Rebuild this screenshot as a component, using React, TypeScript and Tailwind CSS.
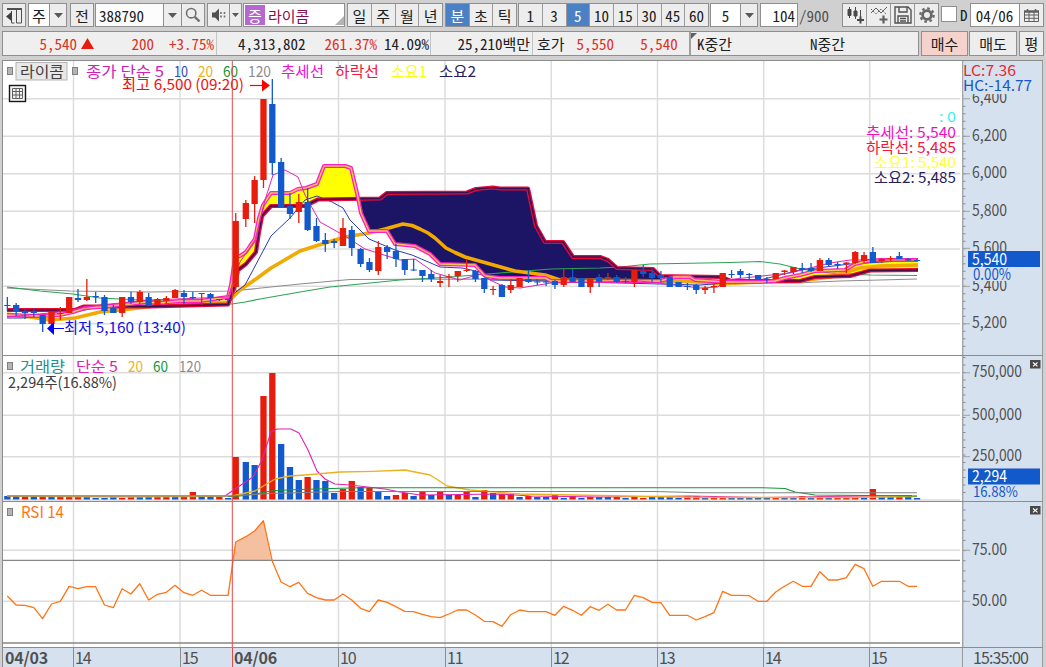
import React from 'react';

const RED = '#e81c0c';
const BLUE = '#1259cb';
const FONT = '"Noto Sans CJK KR", "Liberation Sans", sans-serif';

// color, high, open/close top, open/close bottom, low (pane pixels)
const candles: [string, number, number, number, number][] = [
  ['b', 297, 305, 306, 311], ['b', 303, 305, 312, 316], ['b', 309, 312, 313, 319], ['b', 308, 312, 313, 317],
  ['b', 315, 315, 324, 332], ['r', 312, 312, 324, 325], ['r', 307, 313, 314, 320], ['r', 297, 297, 313, 313],
  ['b', 289, 298, 300, 302], ['r', 279, 297, 300, 301], ['b', 292, 296, 297, 303], ['b', 295, 297, 311, 315],
  ['b', 305, 308, 313, 313], ['r', 297, 297, 313, 317], ['b', 292, 297, 302, 304], ['r', 290, 292, 302, 304],
  ['b', 293, 297, 306, 306], ['r', 298, 299, 305, 305], ['r', 296, 298, 301, 304], ['r', 289, 290, 298, 298],
  ['b', 290, 293, 297, 304], ['b', 292, 297, 298, 299], ['r', 293, 293, 294, 305], ['b', 293, 294, 298, 303],
  ['b', 299, 299, 300, 301], ['b', 299, 299, 300, 301], ['r', 213, 221, 287, 290], ['r', 200, 203, 219, 227],
  ['r', 176, 180, 204, 223], ['r', 99, 99, 180, 188], ['b', 79, 104, 163, 175], ['b', 158, 162, 207, 207],
  ['b', 193, 206, 214, 219], ['r', 194, 202, 212, 223], ['b', 188, 202, 230, 231], ['b', 218, 226, 241, 242],
  ['b', 233, 240, 244, 252], ['b', 239, 241, 243, 248], ['r', 218, 228, 246, 246], ['b', 226, 230, 248, 256],
  ['b', 248, 249, 264, 267], ['b', 258, 262, 270, 272], ['r', 241, 247, 271, 275], ['b', 245, 247, 252, 259],
  ['b', 244, 251, 259, 267], ['b', 259, 259, 270, 275], ['b', 259, 269.5, 270.5, 271], ['b', 270, 270, 276, 282],
  ['b', 270, 274, 279, 282], ['r', 275, 281, 283, 287], ['r', 274, 276.5, 277.5, 287], ['r', 271, 271, 276, 282],
  ['r', 259, 270, 271, 272], ['b', 270, 271, 279, 282], ['b', 278, 278, 289, 293], ['r', 286, 289, 290, 295],
  ['b', 284, 285, 297, 297], ['r', 279, 285, 290, 293], ['r', 278, 278, 287, 287], ['b', 270, 279, 282, 283],
  ['b', 279, 281.5, 282.5, 285], ['b', 280, 281.5, 282.5, 286], ['b', 280, 281, 285, 289], ['r', 269, 277, 285, 287],
  ['b', 269, 277, 282, 282], ['b', 278, 278, 287, 287], ['r', 278, 279, 287, 293], ['b', 274, 277, 282, 287],
  ['r', 273, 277, 278, 280], ['b', 275, 277, 282, 283], ['b', 277, 281, 282, 283], ['r', 270, 270, 282, 287],
  ['b', 265, 271, 274, 277], ['b', 269, 273, 278, 282], ['b', 271, 275, 278, 282], ['b', 275, 277, 287, 287],
  ['b', 282, 282, 287, 287], ['b', 283, 286, 287, 290], ['b', 284, 285, 290, 294], ['r', 286, 288, 290, 294],
  ['r', 284, 286, 287, 293], ['r', 273, 273, 287, 287], ['b', 270, 274, 275, 278], ['b', 269, 271, 275, 278],
  ['b', 273, 274, 275, 280], ['b', 275, 275, 279, 279], ['b', 277, 279, 280, 283], ['r', 273, 273, 279, 279],
  ['r', 270, 270.5, 272, 275], ['r', 267, 267, 272, 274], ['b', 263, 268, 270, 273], ['b', 263, 268, 271, 272],
  ['r', 258, 260, 271, 271], ['b', 258, 260, 265, 266], ['b', 262, 264, 265, 269], ['r', 262, 262.5, 264, 273],
  ['r', 251, 252, 263, 264], ['r', 252, 255, 261, 263], ['b', 247, 252, 263, 263], ['r', 258, 259, 261, 263],
  ['r', 256, 258, 259, 261], ['b', 252, 256, 259, 259], ['b', 258, 259, 260.5, 261], ['b', 259, 260, 261, 261],
];

const volumeTops = [
  496, 496, 497, 497, 497, 497, 497, 497, 497, 497, 498, 498, 497, 498, 497, 497, 497, 497, 497, 497, 497, 492, 497, 497, 497, 498,
  457, 462, 465, 396, 373, 444, 467, 480, 477, 480, 481, 493, 489, 481, 487, 488, 492, 496, 495, 493, 496, 492, 495, 492,
  495, 495, 492, 497, 490, 493, 494, 494, 497, 496, 497, 497, 495, 498, 496, 498, 497, 497, 497, 497, 498, 497, 498, 497,
  497, 497, 498, 496, 496, 498, 496, 497, 498, 498, 498, 498, 498, 498, 498, 498, 496, 498, 496, 498, 498, 498, 497, 497, 489, 497,
  497, 497, 497, 498,
];
const volumeColors =
  'bbrbrbrrrbbbbrrbbrrbrrbbrb' + 'rbbrrbbbrbbbrrbrbbrrbrbrbrrbrbrrbrbbrbrbrbbrbrrbbbbrrbrrbbbbbrbbrbrbrrrbrbbrbb';

const rsi = [
  288, 315, 316, 323, 356, 312, 304, 259, 266, 260, 260, 315, 323, 266, 282, 251, 300, 283, 277, 256, 278, 286, 271, 286, 286, 286,
  126, 110, 93, 62, 184, 246, 260, 247, 280, 293, 300, 300, 282, 300, 325, 335, 300, 307, 320, 334, 335, 343, 350, 353,
  342, 330, 330, 345, 364, 365, 379, 344, 330, 335, 335, 335, 346, 319, 331, 346, 320, 331, 313, 330, 330, 286, 293, 307,
  308, 346, 346, 346, 360, 350, 338, 274, 286, 286, 287, 304, 304, 276, 259, 244, 259, 259, 215, 240, 240, 233, 193, 206, 259, 244,
  244, 244, 259, 259,
];

const barX = (i: number) => (i === 26 ? 235.7 : 7.3 + i * 8.832);
const rsiPoints = rsi.map((v, i) => `${barX(i).toFixed(1)},${(500 + v / 3).toFixed(1)}`).join(' ');

const trend =
  '7,315 40,316 60,315 73,312 85,308 100,307 130,304 145,302 160,303 180,301 200,301 228,297 231,285 235,258 240,256 246,252 250,246 255,239 259,218 263,205 271,193 290,193 298,189 306,188 317,184 324,166 345,166 351,168 357,193 361,213 369,231 387,231 395,244 415,246 430,254 440,264 475,265 485,276 500,278 545,278 551,281 660,281 675,277 690,277 695,280 725,282 760,282 775,281 785,278 800,275 815,271 845,270 855,264 868,261 880,260 918,260';
const fall =
  '7,310 75,310 84,306.5 150,306.5 228,304.5 235,285 238,270 246,264 256,252 259,232 262,216 271,206 305,206 318,199.5 380,198.5 387,193 467,192.5 476,189 493,187.5 500,188.5 528,188.5 536,226 545,242 563,242 573,257 600,257 608,260 617,268 653,269 660,276 721,277 731,281 800,281 815,277 850,276 870,270.5 918,270';
const ma20 =
  '7,314 30,317 50,320 75,318 100,312 130,309 170,304 228,302 240,290 256,279 271,268 300,251 325,243 345,237 369,233 385,229 403,224 412,225.5 420,229 428,233 435,238 446,248 455,252.5 465,257 490,264 515,271 545,275 560,280 690,281 720,284 760,282 800,281 830,277 860,268 880,266 918,265';
const ma60 =
  '7,287 40,291 73,294 100,298 140,300 190,302 232,304 245,302 260,299 300,292 330,287 350,285 400,280 450,277 500,273 551,269 600,268 620,267 650,264 730,262.5 760,261.5 780,264 800,269 830,273 870,275 917,275.5';
const ma120 = '7,288 70,291 150,292 232,291 300,284 350,279.5 480,279 560,281 700,283 795,283 840,281 880,280 917,279';
const ma10 =
  '7,318 22,318 60,315 100,307 150,303 228,298 245,285 253,270 262,253 271,236 290,218 305,200 317,196 332,202 343,208 350,220 369,239 395,250 412,255 440,267 462,268 480,272 490,280 540,281 700,285 760,280 800,270 850,264 917,260';
const ma5 =
  '7,317 60,312 100,305 150,300 228,297 240,262 255,240 265,200 273,175 285,170 298,177 305,195 320,222 345,236 365,249 400,260 415,259 435,273 460,280 480,274 490,280 505,287 520,288 551,283 640,281 700,288 718,287 725,280 790,273 830,263 850,260 917,260';

const hours = [73.5, 180, 338.5, 445, 551.3, 657.5, 763.7, 869.7];

const T = ({ x, y, w, c, size = 15, anchor, children }: any) => (
  <text x={x} y={y} fill={c} fontSize={size} fontFamily={FONT} textLength={w} textAnchor={anchor} lengthAdjust="spacingAndGlyphs">
    {children}
  </text>
);

const Pane = ({ top, height, lines, children }: any) => (
  <svg width={959} height={height} viewBox={`3 ${top} 959 ${height}`} className="block shrink-0 bg-white">
    <g stroke="#dcdcdc" strokeWidth={1.5}>
      {hours.map(x => <line key={x} x1={x} x2={x} y1={top} y2={top + height} />)}
      {lines.map((y: number) => <line key={y} x1={3} x2={960} y1={y} y2={y} />)}
    </g>
    {children}
    <line x1={232.3} x2={232.3} y1={top} y2={top + height} stroke="#e04a4a" strokeWidth={1} />
  </svg>
);

const Axis = ({ top, height, ticks, labels, children }: any) => (
  <svg width={81} height={height} viewBox={`962 ${top} 81 ${height}`} className="block shrink-0 overflow-visible bg-[#d6e1ef]">
    <line x1={962.7} x2={962.7} y1={top} y2={top + height} stroke="#a4a4a4" strokeWidth={1.4} />
    {ticks.map((y: number) => <line key={y} x1={963} x2={965.5} y1={y} y2={y} stroke="#8c8c8c" />)}
    {labels.map(([text, y, w]: any) => (
      <g key={text}>
        <line x1={963} x2={970} y1={y} y2={y} stroke="#a0a0a0" />
        <T x={972} y={y + 4.5} w={w} c="#505050" size={16}>{text}</T>
      </g>
    ))}
    {children}
    <line x1={1042.5} x2={1042.5} y1={top} y2={top + height} stroke="#9a9a9a" />
  </svg>
);

const steps = (from: number, n: number, by: number) => Array.from({ length: n }, (_, i) => from + i * by);

const Marker = ({ x, y }: any) => <rect x={x} y={y} width={5} height={7} fill="#b4b4b4" stroke="#808080" />;

const CloseBox = ({ y }: any) => (
  <g>
    <rect x={1030} y={y} width={10.5} height={8.5} fill="#484848" />
    <path d={`M1033 ${y + 2.5}l4.5 3.8m0-3.8l-4.5 3.8`} stroke="#fff" strokeWidth={1.1} />
  </g>
);

const PricePane = () => (
  <Pane top={61} height={294} lines={[98.8, 136.3, 173.8, 211.3, 248.9, 286.3, 323.8]}>
    <polygon fill="#ffff00" points="231,300 235,258 246,252 255,239 259,218 263,205 271,193 290,193 306,188 317,184 324,166 345,166 351,168 358,199 318,199 305,206 271,206 262,216 256,252 246,264 238,270" />
    <polygon fill="#1c1464" points="358,199 380,198.5 387,193 467,192.5 476,189 528,188.5 536,226 545,242 563,242 573,257 600,257 608,260 617,268 653,269 660,276 660,281 551,281 545,278 500,278 485,276 475,265 440,264 430,254 415,246 395,244 387,231 369,231 361,213" />
    <polygon fill="#ffff00" points="775,281 785,278 800,275 815,271 845,270 855,264 868,261 918,260 918,270 870,270.5 850,276 815,277 800,281" />
    <g fill="none" strokeLinejoin="round">
      <polyline points={ma120} stroke="#8c8c8c" strokeWidth={1.2} />
      <polyline points={ma60} stroke="#2fa354" strokeWidth={1.2} />
      <polyline points={ma20} stroke="#f2a900" strokeWidth={3.6} />
      <polyline points={ma10} stroke="#2a3cb4" strokeWidth={1} />
      <polyline points={fall} stroke="#e8093c" strokeWidth={4.2} />
      <polyline points={fall} stroke="#3c1050" strokeWidth={1.6} />
      <polyline points={trend} stroke="#ff1fc0" strokeWidth={4} />
      <polyline points={trend} stroke="#f5c35a" strokeWidth={1.4} />
      <polyline points={ma5} stroke="#dc28b4" strokeWidth={1} />
    </g>
    {candles.map(([c, hi, top, bottom, lo], i) => (
      <g key={i} fill={c === 'r' ? RED : BLUE}>
        <rect x={barX(i) - 0.6} y={hi} width={1.3} height={lo - hi} />
        <rect x={barX(i) - 3.1} y={top} width={6.3} height={bottom - top} />
      </g>
    ))}

    <Marker x={7.5} y={67.5} />
    <rect x={16} y={62.5} width={51} height={17.5} fill="#e8e8e8" stroke="#b4b4b4" />
    <T x={20} y={77} w={44} c="#404040">라이콤</T>
    <Marker x={72.5} y={67.5} />
    <T x={86} y={77} w={78} c="#d020b8">종가 단순 5</T>
    <T x={174} y={77} w={14} c="#2848b8">10</T>
    <T x={198} y={77} w={15} c="#eeb020">20</T>
    <T x={223} y={77} w={15} c="#109838">60</T>
    <T x={248} y={77} w={23} c="#8c8c8c">120</T>
    <T x={281} y={77} w={43} c="#f010d8">추세선</T>
    <T x={335} y={77} w={44} c="#f81440">하락선</T>
    <T x={391} y={77} w={36} c="#ffff00">소요1</T>
    <T x={439} y={77} w={37} c="#28205c">소요2</T>
    <T x={122} y={89.5} w={122} c="#f01010">최고 6,500 (09:20)</T>
    <path d="M250 85.5h12" stroke="#ff0000" strokeWidth={1.2} />
    <path d="M262 79.5l8 6-8 6z" fill="#ff0000" />

    <rect x={9.5} y={85.5} width={16} height={16} fill="#f4f4f4" stroke="#181818" strokeWidth={1.4} />
    <path d="M12.5 88.5h10v10h-10zM12.5 91.5h10M12.5 95h10M16 88.5v10M19.5 88.5v10" fill="none" stroke="#606060" />

    <path d="M53 328.5h11" stroke="#0000ff" />
    <path d="M47 328.5l7-6.5v13z" fill="#0000ff" />
    <T x={64} y={333} w={122} c="#1414e0">최저 5,160 (13:40)</T>

    <T x={939} y={122} w={17} c="#40f0f0" size={14}>: 0</T>
    <T x={866} y={138} w={90} c="#f010c8">추세선: 5,540</T>
    <T x={866} y={153} w={90} c="#f81440">하락선: 5,485</T>
    <T x={874} y={168} w={82} c="#ffff40">소요1: 5,540</T>
    <T x={874} y={183} w={82} c="#28205c">소요2: 5,485</T>
  </Pane>
);

const VolumePane = () => (
  <Pane top={356} height={145} lines={[372.8, 415.3, 456.7]}>
    <rect x={3} y={499} width={957} height={2} fill="#e4e4e4" />
    {volumeTops.map((y, i) => (
      <rect key={i} x={barX(i) - 3.1} y={y} width={6.3} height={499.5 - y} fill={volumeColors[i] === 'r' ? RED : BLUE} />
    ))}
    <g fill="none" strokeWidth={1.1} strokeLinejoin="round">
      <polyline stroke="#e020b8" points="7,496 225,496 235,489 253,477 262,460 271,432 277,429 291,429 299,433 308,450 317,471 325,479 335,484 350,485 385,489 400,492 420,495 500,494 530,496 600,497 690,496 760,497.5 830,496.5 912,495.5" />
      <polyline stroke="#eeb020" strokeWidth={1.3} points="7,496 120,497 232,496 255,491 275,479 290,476 305,475 340,472 373,471.3 405,470 430,475 438,480 447,486 470,490 520,494 600,495.5 700,497.5 850,497.5 917,496.5" />
      <polyline stroke="#109838" points="228,496.5 240,496 255,494 275,490.5 300,489.5 340,488.3 360,487.7 763,487.7 785,488.5 795,492 815,495 917,496" />
      <polyline stroke="#808080" points="7,496 228,496 270,493.5 340,491.5 655,491.5 700,492.7 917,492.7" />
    </g>
    <Marker x={7.5} y={362.5} />
    <T x={20} y={372} w={45} c="#209090">거래량</T>
    <T x={76} y={372} w={42} c="#e020b8">단순 5</T>
    <T x={128} y={372} w={15} c="#eeb020">20</T>
    <T x={153} y={372} w={15} c="#109838">60</T>
    <T x={179} y={372} w={22} c="#8c8c8c">120</T>
    <T x={8} y={388} w={109} c="#404040">2,294주(16.88%)</T>
  </Pane>
);

const RsiPane = () => (
  <Pane top={502} height={145} lines={[550.2, 601.3]}>
    <polygon fill="#f5c0a0" points="233,560 235.7,542 245.7,536.7 254.5,531 263.4,520.7 271,560" />
    <path d="M3 560.4h957M3 643h957" stroke="#868686" strokeWidth={1.3} />
    <polyline points={rsiPoints} fill="none" stroke="#ff7414" strokeWidth={1.3} strokeLinejoin="round" />
    <Marker x={7.5} y={508.5} />
    <T x={21} y={518} w={43} c="#ff7414" size={16}>RSI 14</T>
  </Pane>
);

const Btn = ({ className = '', children }: any) => (
  <div className={`flex h-6 shrink-0 items-center justify-center border border-[#8f8f8f] bg-[#ededed] ${className}`}>{children}</div>
);

const Caret = () => (
  <svg width="9" height="5" viewBox="0 0 9 5"><path d="M0 0h9L4.5 5z" fill="#5a5a5a" /></svg>
);

const Group = ({ items, active, className }: any) => (
  <div className={`flex h-6 shrink-0 divide-x divide-[#9a9a9a] border border-[#8f8f8f] ${className}`}>
    {items.map((it: string) => (
      <div key={it} className={`flex flex-1 items-center justify-center ${it === active ? 'bg-[#4c80c4] text-white' : 'bg-[#ededed]'}`}>{it}</div>
    ))}
  </div>
);

const Toolbar = () => (
  <div className="flex h-[31px] items-start pt-[3px] pl-[2px]">
    <Btn className="w-6">
      <svg width="17" height="17" viewBox="0 0 17 17" fill="none" stroke="#505050">
        <path d="M1 2.5h15M1 1.5h15" />
        <path d="M15.5 2v14h-5v-13" />
        <path d="M5.5 4v12h3" />
        <path d="M0 9.5l6-5v10z" fill="#404040" stroke="none" />
      </svg>
    </Btn>
    <Btn className="ml-[2px] w-[22px] bg-white">주</Btn>
    <Btn className="-ml-px w-[18px]"><Caret /></Btn>
    <Btn className="ml-[3px] w-6">전</Btn>
    <Btn className="ml-px w-[69px] justify-start bg-[#fcfcfc] pl-[3px]"><span>388790</span></Btn>
    <Btn className="-ml-px w-[19px]"><Caret /></Btn>
    <Btn className="-ml-px w-6">
      <svg width="16" height="16" viewBox="0 0 16 16" fill="none" stroke="#707070">
        <circle cx="6.2" cy="6.2" r="4.7" strokeWidth="1.6" />
        <path d="M9.8 9.8l4.7 4.7" strokeWidth="2.4" />
      </svg>
    </Btn>
    <Btn className="ml-[2px] w-[23px]">
      <svg width="16" height="14" viewBox="0 0 16 14">
        <path d="M1 4.5h3L8 .5v13L4 9.5H1z" fill="#505050" />
        <path d="M10 4v6M13.5 4v6" stroke="#707070" strokeWidth="1.6" strokeDasharray="2 1.4" />
      </svg>
    </Btn>
    <Btn className="-ml-px w-[13px]"><svg width="7" height="4" viewBox="0 0 7 4"><path d="M0 0h7L3.5 4z" fill="#5a5a5a" /></svg></Btn>
    <div className="ml-px flex h-6 w-[102px] shrink-0 items-center border border-[#8f8f8f] bg-white pl-px text-[#8c0c50]">
      <span className="flex h-5 w-5 items-center justify-center bg-[#b468d0] text-white">증</span>
      <span className="ml-[3px]">라이콤</span>
      <svg width="9" height="9" viewBox="0 0 9 9" className="mb-px ml-auto self-end"><path d="M9 0v9H0z" fill="#b4b4b4" /></svg>
    </div>
    <Group className="ml-[2px] w-[96px]" items={['일', '주', '월', '년']} />
    <Group className="ml-[2px] w-[72px]" items={['분', '초', '틱']} active="분" />
    <Group className="ml-px w-[191px]" items={['1', '3', '5', '10', '15', '30', '45', '60']} active="5" />
    <Btn className="ml-px w-[31px] bg-white">5</Btn>
    <Btn className="-ml-px w-[18px]"><Caret /></Btn>
    <Btn className="ml-[2px] w-[38px] justify-end bg-white pr-[2px]">104</Btn>
    <span className="ml-[1px] flex h-6 items-center text-[#505050]">/900</span>
    <div className="ml-[13px] flex h-6 w-[97px] shrink-0 divide-x divide-[#9a9a9a] border border-[#8f8f8f] bg-[#ededed]">
      <div className="flex flex-1 items-center justify-center">
        <svg width="18" height="18" viewBox="0 0 18 18" stroke="#484848">
          <path d="M3.5 1v11M9.5 1v12" /><path d="M2 3.5h3v6H2zM8 5h3v5H8z" fill="#484848" />
          <path d="M14.5 4v7" /><path d="M11 14h7M14.5 10.5v7" strokeWidth="2" />
        </svg>
      </div>
      <div className="flex flex-1 items-center justify-center">
        <svg width="18" height="18" viewBox="0 0 18 18" fill="none" stroke="#606060">
          <path d="M1 7l5-5 5 5 6-6" /><path d="M1 3l5 5 5-5 5 5" strokeDasharray="1.5 1" />
          <path d="M9.5 13.5h8M13.5 9.5v8" strokeWidth="2.2" />
        </svg>
      </div>
      <div className="flex flex-1 items-center justify-center">
        <svg width="18" height="18" viewBox="0 0 18 18" fill="none" stroke="#505050" strokeWidth="1.4">
          <path d="M1 1h13l3 3v13H1z" /><path d="M5 1v5h8V1M4 17v-7h10v7M6 12.5h6M6 15h6" />
        </svg>
      </div>
      <div className="flex flex-1 items-center justify-center">
        <svg width="16" height="16" viewBox="0 0 16 16" fill="none" stroke="#686868">
          <circle cx="8" cy="8" r="4.4" strokeWidth="2.8" />
          <circle cx="8" cy="8" r="6.7" strokeWidth="2.2" strokeDasharray="2.63 2.63" />
        </svg>
      </div>
    </div>
    <div className="mt-[3px] ml-[2px] h-4 w-4 shrink-0 border border-[#8f8f8f] bg-white" />
    <span className="ml-[3px] flex h-[22px] items-center">D</span>
    <Btn className="ml-[2px] w-[50px] bg-white">04/06</Btn>
    <Btn className="-ml-px w-[25px]">
      <svg width="15" height="13" viewBox="0 0 15 13" fill="none" stroke="#606060">
        <path d="M.5 2.5h14v10H.5zM.5 6h14M.5 9.3h14M5 3v9M10 3v9" />
        <path d="M0 2.5h15" strokeWidth="2.5" /><path d="M3.5 0v2M11.5 0v2" strokeWidth="1.5" />
      </svg>
    </Btn>
  </div>
);

const InfoRow = () => (
  <div className="flex h-[29px] items-start pl-[2px]">
    <div className="flex h-[25px] w-[917px] shrink-0 items-center border border-[#8f8f8f] bg-[#efefef] *:flex *:h-full *:shrink-0 *:items-center">
      <div className="w-[214px] border-r border-[#c4c4c4] text-[#e03020]">
        <span className="w-[74px] text-right">5,540</span>
        <svg width="13" height="11" viewBox="0 0 13 11" className="ml-1"><path d="M6.5 0L13 11H0z" fill={RED} /></svg>
        <span className="w-[60px] text-right">200</span>
        <span className="w-[60px] text-right">+3.75%</span>
      </div>
      <div className="w-[214px] justify-end border-r border-[#c4c4c4] pr-[1px]">
        <span>4,313,802</span>
        <span className="ml-[19px] text-[#e03020]">261.37%</span>
        <span className="ml-[7px]">14.09%</span>
      </div>
      <div className="w-[102px] justify-end border-r border-[#c4c4c4] pr-[2px]">25,210백만</div>
      <div className="w-[158px] border-r-2 border-[#a0a0a0] pl-[4px]">
        <span>호가</span>
        <span className="ml-[12px] text-[#e03020]">5,550</span>
        <span className="ml-[26px] text-[#e03020]">5,540</span>
      </div>
      <div>
        <svg width="6" height="6" viewBox="0 0 6 6" className="mt-px self-start"><path d="M0 0h6L0 6z" fill="#606060" /></svg>
        <span className="w-[113px]">K중간</span>
        <span>N중간</span>
      </div>
    </div>
    <Btn className="ml-[2px] h-[25px] w-[47px] bg-[#f6d2cc]">매수</Btn>
    <Btn className="ml-[1px] h-[25px] w-[48px] bg-[#c8def4]">매도</Btn>
    <Btn className="ml-[2px] h-[25px] w-[25px]">평</Btn>
  </div>
);

const TimeAxis = () => (
  <div className="grid h-5 grid-cols-[70px_107px_52px_106px_107px_106px_106px_106px_106px_93px_81px] border-t border-[#8c8c8c] bg-[#d6e1ef] text-[16px] leading-[18px] tracking-[-1.2px] text-[#505050]">
    <span className="pl-[2px] font-bold tracking-[-0.2px]">04/03</span>
    {['14', '15'].map(h => <span key={h} className="border-l border-[#8c8c8c] pl-px">{h}</span>)}
    <span className="border-l border-[#e04a4a] pl-px font-bold tracking-[-0.2px]">04/06</span>
    {['10', '11', '12', '13', '14', '15'].map(h => <span key={h} className="border-l border-[#8c8c8c] pl-px">{h}</span>)}
    <span className="border-x border-[#9a9a9a] pl-[10px] tracking-[-0.9px]">15:35:00</span>
  </div>
);

const App = () => (
  <div
    className="h-[667px] w-[1046px] overflow-hidden bg-[#d0d0d0] font-['Noto_Sans_CJK_KR','Liberation_Sans',sans-serif] text-[15px] leading-none whitespace-pre text-[#202020]"
  >
    <div className="[font-feature-settings:'hwid']">
      <Toolbar />
      <InfoRow />
    </div>
    <div className="ml-[2px] w-[1041px] border-t border-l border-[#8c8c8c]">
      <div className="flex border-b border-[#8c8c8c]">
        <PricePane />
        <Axis
          top={61} height={294} ticks={steps(106.3, 33, 7.5)}
          labels={[['6,400', 98.8, 35], ['6,200', 136.3, 35], ['6,000', 173.8, 35], ['5,800', 211.3, 35], ['5,600', 248.3, 35], ['5,400', 286.3, 35], ['5,200', 323.8, 35]]}
        >
          <rect x={963.5} y={62} width={76} height={32} fill="#d6e1ef" />
          <T x={963} y={76} w={53} c="#e82828">LC:7.36</T>
          <T x={963} y={91} w={69} c={BLUE}>HC:-14.77</T>
          <rect x={972} y={267} width={68} height={14} fill="#d6e1ef" />
          <T x={973} y={279.5} w={38} c={BLUE} size={16}>0.00%</T>
          <rect x={968} y={251} width={72} height={16} fill="#1259cb" />
          <T x={972} y={265} w={35} c="#ffffff" size={16}>5,540</T>
        </Axis>
      </div>
      <div className="flex border-b border-[#8c8c8c]">
        <VolumePane />
        <Axis top={356} height={145} ticks={steps(357.5, 19, 7.5)} labels={[['750,000', 372.8, 50], ['500,000', 415.3, 50], ['250,000', 456.7, 50]]}>
          <T x={973} y={497} w={45} c={BLUE}>16.88%</T>
          <rect x={968} y={468.5} width={72} height={16} fill="#1259cb" />
          <T x={972} y={482} w={35} c="#ffffff" size={16}>2,294</T>
          <CloseBox y={360} />
        </Axis>
      </div>
      <div className="flex">
        <RsiPane />
        <Axis top={502} height={145} ticks={steps(510, 10, 10.15)} labels={[['75.00', 550.2, 35], ['50.00', 601.3, 35]]}>
          <CloseBox y={506} />
        </Axis>
      </div>
      <TimeAxis />
    </div>
  </div>
);

export default App;
